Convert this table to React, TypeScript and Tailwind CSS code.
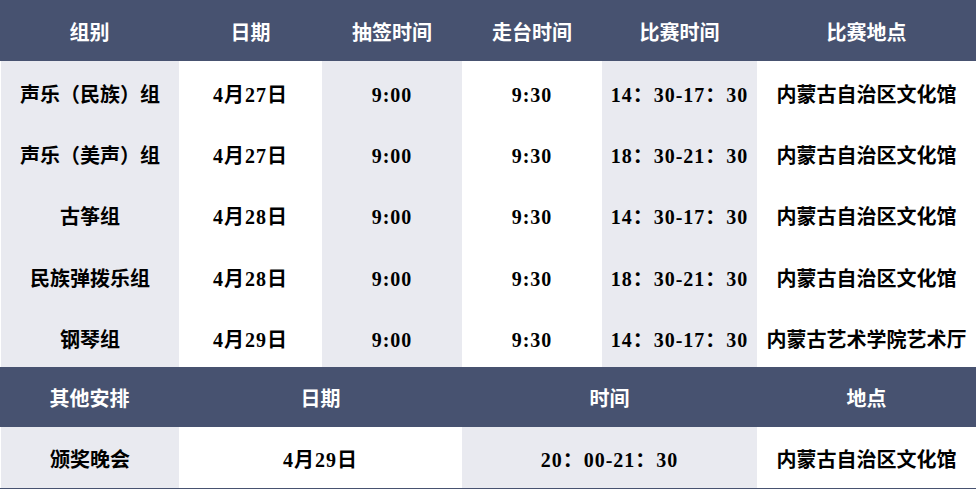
import React from 'react';

const rows = [
  ['声乐（民族）组', '4月27日', '9:00', '9:30', '14：30-17：30', '内蒙古自治区文化馆'],
  ['声乐（美声）组', '4月27日', '9:00', '9:30', '18：30-21：30', '内蒙古自治区文化馆'],
  ['古筝组', '4月28日', '9:00', '9:30', '14：30-17：30', '内蒙古自治区文化馆'],
  ['民族弹拨乐组', '4月28日', '9:00', '9:30', '18：30-21：30', '内蒙古自治区文化馆'],
  ['钢琴组', '4月29日', '9:00', '9:30', '14：30-17：30', '内蒙古艺术学院艺术厅'],
];

const head = ['组别', '日期', '抽签时间', '走台时间', '比赛时间', '比赛地点'];

const font = { fontFamily: '"Liberation Serif", "Noto Sans CJK SC", serif' };

export default function App() {
  return (
    <div className="w-[976px] h-[489px] bg-white overflow-hidden" style={font}>
      <div className="grid grid-cols-[179px_143px_140px_140px_155px_219px] text-[20px] font-bold text-black">
        {/* header */}
        {head.map((h) => (
          <div key={h} className="h-[61px] bg-[#475270] text-white flex items-center justify-center pt-[5px]">
            {h}
          </div>
        ))}

        {/* rows */}
        {rows.map((r, i) =>
          r.map((c, j) => (
            <div
              key={i + '-' + j}
              className={`h-[61.2px] flex items-center justify-center whitespace-nowrap pt-[7px] ${
                j % 2 === 0 ? 'bg-[#e9eaf0]' : 'bg-white'
              } ${j === 0 ? 'ml-px' : ''} ${j >= 1 && j <= 4 ? 'tracking-[1px]' : ''}`}
            >
              {c}
            </div>
          ))
        )}

        {/* other arrangements header */}
        <div className="h-[60px] bg-[#475270] text-white flex items-center justify-center pt-[5px]">其他安排</div>
        <div className="col-span-2 h-[60px] bg-[#475270] text-white flex items-center justify-center pt-[5px]">日期</div>
        <div className="col-span-2 h-[60px] bg-[#475270] text-white flex items-center justify-center pt-[5px]">时间</div>
        <div className="h-[60px] bg-[#475270] text-white flex items-center justify-center pt-[5px]">地点</div>

        <div className="h-[61px] ml-px bg-[#e9eaf0] flex items-center justify-center pt-[6px]">颁奖晚会</div>
        <div className="col-span-2 h-[61px] bg-white flex items-center justify-center pt-[6px] tracking-[1px]">4月29日</div>
        <div className="col-span-2 h-[61px] bg-[#e9eaf0] flex items-center justify-center pt-[6px] tracking-[1px]">20：00-21：30</div>
        <div className="h-[61px] bg-white flex items-center justify-center pt-[6px]">内蒙古自治区文化馆</div>
      </div>
      <div className="h-px bg-[#475270]" />
    </div>
  );
}
